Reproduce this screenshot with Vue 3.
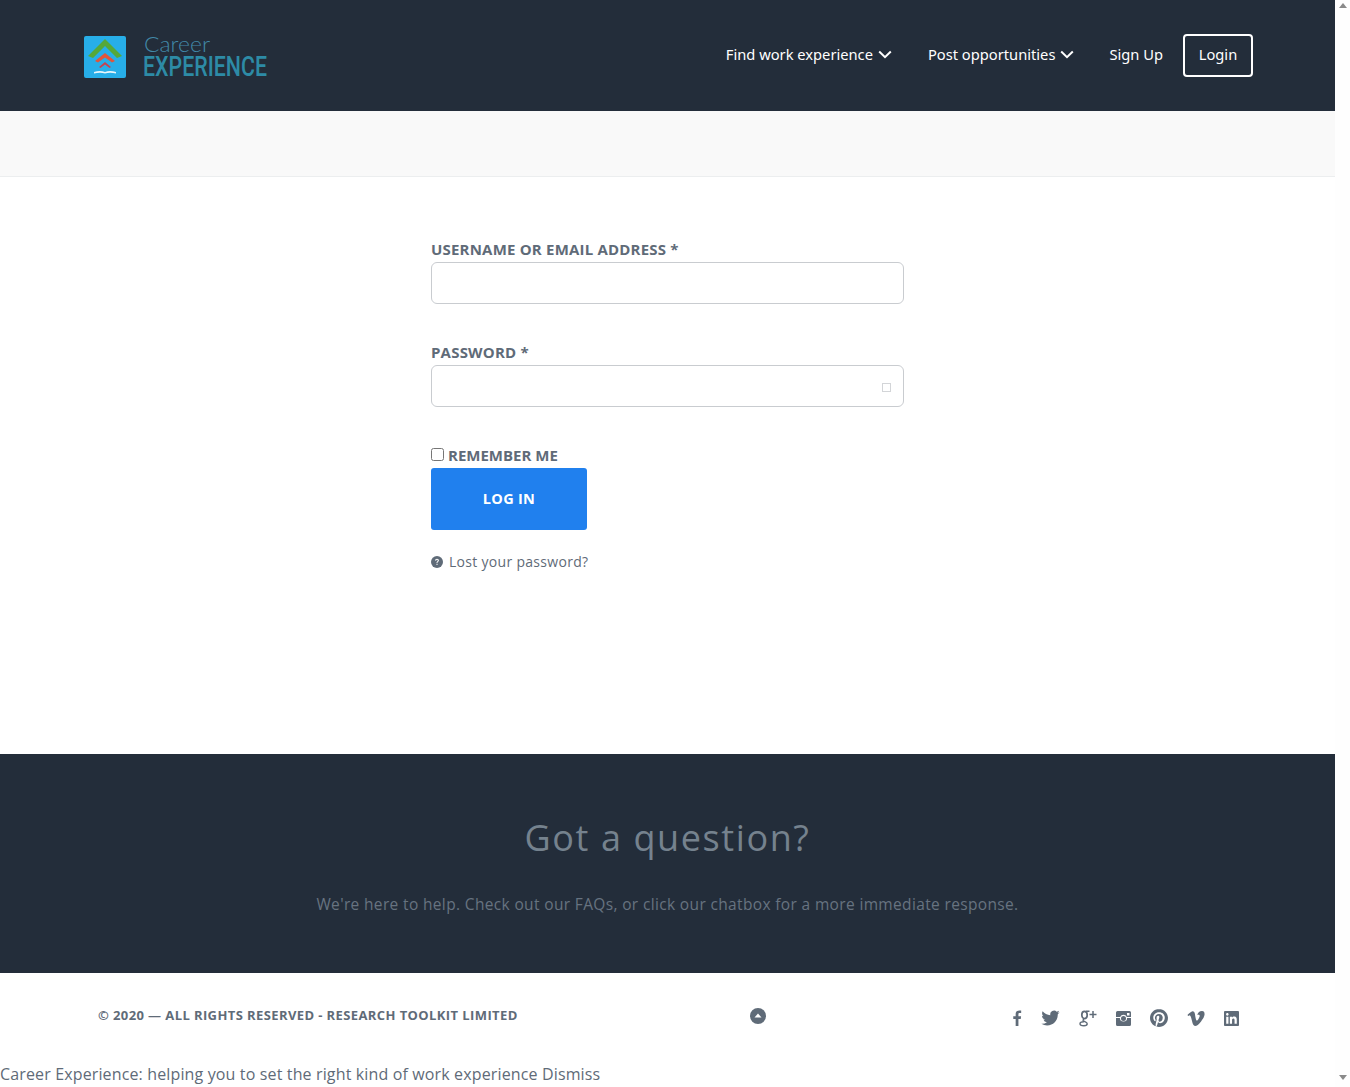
<script setup>
const navItems = [
  { label: 'Find work experience', caret: true },
  { label: 'Post opportunities', caret: true },
  { label: 'Sign Up', caret: false }
]
const socials = [
  { name: 'facebook', w: 10, h: 16, vb: '0 0 10 18', d: 'M6.6 18V10h2.6l.4-3.1h-3V5c0-.9.3-1.5 1.5-1.5h1.6V.7C9.4.6 8.5.5 7.500.5 5.100.5 3.500 2 3.500 4.600v2.300H.8V10h2.700v8z' },
  { name: 'twitter', w: 19, h: 16, vb: '0 1.500 24 21', d: 'M23.953 4.57a10 10 0 01-2.825.775 4.958 4.958 0 002.163-2.723c-.951.555-2.005.959-3.127 1.184a4.92 4.92 0 00-8.384 4.482C7.69 8.095 4.067 6.13 1.64 3.162a4.822 4.822 0 00-.666 2.475c0 1.71.87 3.213 2.188 4.096a4.904 4.904 0 01-2.228-.616v.06a4.923 4.923 0 003.946 4.827 4.996 4.996 0 01-2.212.085 4.936 4.936 0 004.604 3.417 9.867 9.867 0 01-6.102 2.105c-.39 0-.779-.023-1.17-.067a13.995 13.995 0 007.557 2.209c9.053 0 13.998-7.496 13.998-13.985 0-.21 0-.42-.015-.63A9.935 9.935 0 0024 4.59z' },
  { name: 'pinterest', w: 18, h: 18, vb: '0 0 24 24', d: 'M12.017 0C5.396 0 .029 5.367.029 11.987c0 5.079 3.158 9.417 7.618 11.162-.105-.949-.199-2.403.041-3.439.219-.937 1.406-5.957 1.406-5.957s-.359-.72-.359-1.781c0-1.663.967-2.911 2.168-2.911 1.024 0 1.518.769 1.518 1.688 0 1.029-.653 2.567-.992 3.992-.285 1.193.6 2.165 1.775 2.165 2.128 0 3.768-2.245 3.768-5.487 0-2.861-2.063-4.869-5.008-4.869-3.41 0-5.409 2.562-5.409 5.199 0 1.033.394 2.143.889 2.741.099.12.112.225.085.345-.09.375-.293 1.199-.334 1.363-.053.225-.172.271-.401.165-1.495-.69-2.433-2.878-2.433-4.646 0-3.776 2.748-7.252 7.92-7.252 4.158 0 7.392 2.967 7.392 6.923 0 4.135-2.607 7.462-6.233 7.462-1.214 0-2.354-.629-2.758-1.379l-.749 2.848c-.269 1.045-1.004 2.352-1.498 3.146 1.123.345 2.306.535 3.55.535 6.607 0 11.985-5.365 11.985-11.987C23.97 5.39 18.592.026 11.985.026L12.017 0z' },
  { name: 'vimeo', w: 18, h: 15, vb: '0 1.500 24 21', d: 'M23.977 6.416c-.105 2.338-1.739 5.543-4.894 9.609-3.268 4.247-6.026 6.37-8.29 6.37-1.409 0-2.578-1.294-3.553-3.881L5.322 11.4C4.603 8.816 3.834 7.522 3.01 7.522c-.179 0-.806.378-1.881 1.132L0 7.197c1.185-1.044 2.351-2.084 3.501-3.128C5.08 2.701 6.266 1.984 7.055 1.91c1.867-.18 3.016 1.1 3.447 3.838.465 2.953.789 4.789.971 5.507.539 2.45 1.131 3.674 1.776 3.674.502 0 1.256-.796 2.265-2.385 1.004-1.589 1.54-2.797 1.612-3.628.144-1.371-.395-2.061-1.614-2.061-.574 0-1.167.121-1.777.391 1.186-3.868 3.434-5.757 6.762-5.637 2.473.06 3.628 1.664 3.493 4.797l-.013.01z' },
  { name: 'linkedin', w: 15, h: 15, vb: '0 0 24 24', d: 'M20.447 20.452h-3.554v-5.569c0-1.328-.027-3.037-1.852-3.037-1.853 0-2.136 1.445-2.136 2.939v5.667H9.351V9h3.414v1.561h.046c.477-.9 1.637-1.85 3.37-1.85 3.601 0 4.267 2.37 4.267 5.455v6.286zM5.337 7.433c-1.144 0-2.063-.926-2.063-2.065 0-1.138.92-2.063 2.063-2.063 1.14 0 2.064.925 2.064 2.063 0 1.139-.925 2.065-2.064 2.065zm1.782 13.019H3.555V9h3.564v11.452zM22.225 0H1.771C.792 0 0 .774 0 1.729v20.542C0 23.227.792 24 1.771 24h20.451C23.2 24 24 23.227 24 22.271V1.729C24 .774 23.2 0 22.222 0h.003z' }
]
</script>

<template>
  <div class="shell">
    <div class="page">
      <header class="top">
        <a class="logo" href="#">
          <svg width="200" height="60" viewBox="0 0 200 60">
            <rect x="0" y="9" width="42" height="42" rx="2" fill="#27aee8" />
            <path d="M4 29 21 12l17 17-5 2L21 19 9 31z" fill="#55a83a" />
            <path d="M11 34 21 26l10 8-3 1.500-7-5-7 5z" fill="#e2553a" />
            <path d="M15 40l6-5 6 5-1.500 1L21 37.500 16.500 41z" fill="#c8404f" />
            <path d="M10 45c4-1.500 8-1.500 11 0 3-1.500 7-1.500 11 0v1.500c-4-1-8-1-11 0-3-1-7-1-11 0z" fill="#e8f6fb" />
            <text x="60" y="25" class="logo-a" textLength="66" lengthAdjust="spacingAndGlyphs">Career</text>
            <text transform="translate(59 49) scale(.75 1)" class="logo-b" textLength="165.300" lengthAdjust="spacingAndGlyphs">EXPERIENCE</text>
          </svg>
        </a>
        <nav class="nav">
          <a v-for="item in navItems" :key="item.label" class="nav-link" href="#">
            {{ item.label }}
            <svg v-if="item.caret" class="caret" width="14" height="9" viewBox="0 0 14 9">
              <path d="M1.200 1.500 7 7.200l5.800-5.700" fill="none" stroke="#fff" stroke-width="2" />
            </svg>
          </a>
          <a class="login" href="#">Login</a>
        </nav>
      </header>

      <div class="band"></div>

      <main class="content">
        <form class="form" @submit.prevent>
          <label class="field">
            <span class="label">USERNAME OR EMAIL ADDRESS <i>*</i></span>
            <input class="input" type="text" />
          </label>
          <label class="field pw">
            <span class="label">PASSWORD <i>*</i></span>
            <input class="input" type="password" />
            <span class="eye"></span>
          </label>
          <label class="remember">
            <input class="check" type="checkbox" />
            <span>REMEMBER ME</span>
          </label>
          <button class="submit" type="submit">LOG IN</button>
          <a class="lost" href="#">
            <svg width="12" height="12" viewBox="0 0 12 12">
              <circle cx="6" cy="6" r="6" fill="#5f6b78" />
              <path d="M4.100 4.600c0-1.100.8-1.800 1.900-1.800s1.900.7 1.900 1.700c0 1.300-1.500 1.300-1.500 2.400H5.500c0-1.600 1.300-1.600 1.300-2.400 0-.4-.3-.7-.8-.7s-.8.3-.9.9zM5.500 7.800h1v1.200h-1z" fill="#fff" />
            </svg>
            Lost your password?
          </a>
        </form>
      </main>

      <section class="cta">
        <h2>Got a question?</h2>
        <p>We're here to help. Check out our FAQs, or click our chatbox for a more immediate response.</p>
      </section>

      <footer class="foot">
        <div class="foot-row">
          <span class="copy">© 2020 — ALL RIGHTS RESERVED - RESEARCH TOOLKIT LIMITED</span>
          <svg class="up" width="16" height="16" viewBox="0 0 16 16">
            <circle cx="8" cy="8" r="8" fill="#5f6b78" />
            <path d="M8 5.500 11.500 9.500h-7z" fill="#fff" />
          </svg>
          <div class="social">
            <svg :width="socials[0].w" :height="socials[0].h" :viewBox="socials[0].vb"><path :d="socials[0].d" /></svg>
            <svg :width="socials[1].w" :height="socials[1].h" :viewBox="socials[1].vb"><path :d="socials[1].d" /></svg>
            <svg width="18" height="17" viewBox="0 0 18 17">
              <g fill="none" stroke="#5f6b78">
                <ellipse cx="5.500" cy="5" rx="2.700" ry="3.600" stroke-width="1.700" />
                <path d="M5 9.200c-.9.400-1.200 1-.7 1.600 1 .9 3.900 1.400 3.900 3 0 1.300-1.400 2-3.300 2S1 15.100 1 13.800c0-1.400 1.600-2.100 3.900-2.100" stroke-width="1.400" />
                <path d="M7 1.200h3.500M14 1v7M10.500 4.500h7" stroke-width="1.500" />
              </g>
            </svg>
            <svg width="15" height="15" viewBox="0 0 15 15">
              <path fill-rule="evenodd" d="M1.500 0h12A1.500 1.500 0 0 1 15 1.500v12a1.500 1.500 0 0 1-1.500 1.500h-12A1.500 1.500 0 0 1 0 13.500v-12A1.500 1.500 0 0 1 1.500 0zM0 6h4.200a3.600 3.600 0 0 1 6.600 0H15v1H11.100a3.600 3.600 0 1 1-7.200 0H0zM7.500 5a2.500 2.500 0 1 0 0 5 2.500 2.500 0 0 0 0-5zM11 2v2.500h2.500V2z" />
            </svg>
            <svg :width="socials[2].w" :height="socials[2].h" :viewBox="socials[2].vb"><path :d="socials[2].d" /></svg>
            <svg :width="socials[3].w" :height="socials[3].h" :viewBox="socials[3].vb"><path :d="socials[3].d" /></svg>
            <svg :width="socials[4].w" :height="socials[4].h" :viewBox="socials[4].vb"><path :d="socials[4].d" /></svg>
          </div>
        </div>
        <p class="notice">Career Experience: helping you to set the right kind of work experience Dismiss</p>
      </footer>
    </div>
    <aside class="scrollbar">
      <span class="arrow up-arrow"></span>
      <span class="arrow down-arrow"></span>
    </aside>
  </div>
</template>

<style>
html, body { margin: 0; overflow: hidden; background: #fff; }
</style>

<style scoped>
.shell {
  display: flex;
  width: 1350px;
  height: 1087px;
  overflow: hidden;
  font-family: "Open Sans", "Noto Sans", sans-serif;
  color: #5f6b78;
}
.page { width: 1335px; flex: none; display: flex; flex-direction: column; }
.scrollbar {
  width: 15px;
  flex: none;
  display: flex;
  flex-direction: column;
  justify-content: space-between;
  align-items: center;
  padding: 3px 0 7px;
  box-sizing: border-box;
  background: #fefefe;
}
.arrow { width: 0; height: 0; border-left: 4px solid transparent; border-right: 4px solid transparent; }
.up-arrow { border-bottom: 5px solid #8a8a8a; }
.down-arrow { border-top: 5px solid #8a8a8a; }

.top {
  height: 111px;
  flex: none;
  box-sizing: border-box;
  padding: 0 82px 0 84px;
  background: #232d3a;
  display: flex;
  align-items: center;
  justify-content: space-between;
}
.logo { display: block; height: 60px; margin: 2px -16px 0 0; }
.logo-a { font: 300 22px "Lato", sans-serif; fill: #4289a8; }
.logo-b { font: 500 28px "Roboto", sans-serif; fill: #2d8ba6; }
.nav { display: flex; align-items: center; }
.nav-link {
  color: #fff;
  font: 14.700px "Noto Sans", sans-serif;
  text-decoration: none;
  margin-right: 36px;
  display: flex;
  align-items: center;
  gap: 5px;
  position: relative;
  top: -2px;
}
.nav-link .caret { position: relative; top: 1px; }
.nav-link:nth-child(2) { margin-right: 35px; }
.nav-link:nth-child(3) { margin-right: 20px; }
.caret { flex: none; }
.login {
  box-sizing: border-box;
  width: 70px;
  height: 43px;
  border: 2px solid #fff;
  border-radius: 4px;
  color: #fff;
  font: 14.700px "Noto Sans", sans-serif;
  text-decoration: none;
  display: flex;
  align-items: center;
  justify-content: center;
  padding-bottom: 4px;
}

.band { height: 66px; flex: none; box-sizing: border-box; background: #f9f9f9; border-bottom: 1px solid #eceeef; }

.content { height: 577px; flex: none; display: flex; justify-content: center; background: #fff; }
.form { width: 473px; padding-top: 63px; box-sizing: border-box; display: flex; flex-direction: column; align-items: flex-start; }
.field { display: flex; flex-direction: column; width: 100%; margin-bottom: 39px; position: relative; }
.label { font: 700 15px/18px "Open Sans", sans-serif; color: #5f6b78; letter-spacing: .2px; margin-bottom: 4px; }
.label i { font-style: normal; font-weight: 700; }
.input {
  box-sizing: border-box;
  width: 100%;
  height: 42px;
  border: 1px solid #c9ccd0;
  border-radius: 6px;
  background: #fff;
  padding: 0 10px;
  outline: none;
}
.eye {
  position: absolute;
  right: 13px;
  bottom: 15px;
  width: 9px;
  height: 9px;
  border: 1px solid #d3d5d8;
  box-sizing: border-box;
}
.remember { display: flex; align-items: center; height: 18px; font: 700 15px/18px "Open Sans", sans-serif; color: #5f6b78; }
.check { width: 13px; height: 13px; margin: 0 4px 2px 0; }
.submit {
  width: 156px;
  height: 62px;
  margin-top: 4px;
  padding: 0 0 2px;
  border: 0;
  border-radius: 3px;
  background: #2080ee;
  color: #fff;
  font: 700 14.500px "Open Sans", sans-serif;
  letter-spacing: .3px;
}
.lost {
  margin-top: 23px;
  display: flex;
  align-items: center;
  gap: 6px;
  color: #5f6b78;
  font: 14px/18px "Open Sans", sans-serif;
  letter-spacing: .3px;
  text-decoration: none;
}

.cta { height: 219px; flex: none; box-sizing: border-box; background: #232d3a; text-align: center; padding-top: 59px; }
.cta h2 { margin: 0; font: 400 36px/49px "Open Sans", sans-serif; letter-spacing: 1.600px; color: #75828e; }
.cta p { margin: 32px 0 0; font: 15.500px/21px "Open Sans", sans-serif; letter-spacing: .35px; color: #677380; }

.foot { flex: 1; display: flex; flex-direction: column; background: #fff; }
.foot-row {
  display: grid;
  grid-template-columns: 652px 1fr auto;
  align-items: center;
  padding: 34px 96px 0 98px;
  height: 56px;
  box-sizing: border-box;
}
.copy { font: 700 13px/18px "Open Sans", sans-serif; letter-spacing: .4px; color: #5f6b78; position: relative; top: -3px; white-space: nowrap; }
.up { margin-top: -4px; }
.social { display: flex; align-items: center; gap: 19px; }
.social svg { fill: #5f6b78; display: block; }
.notice { margin: 35px 0 0; font: 16px/21px "Open Sans", sans-serif; letter-spacing: .14px; color: #5f6b78; }
</style>
